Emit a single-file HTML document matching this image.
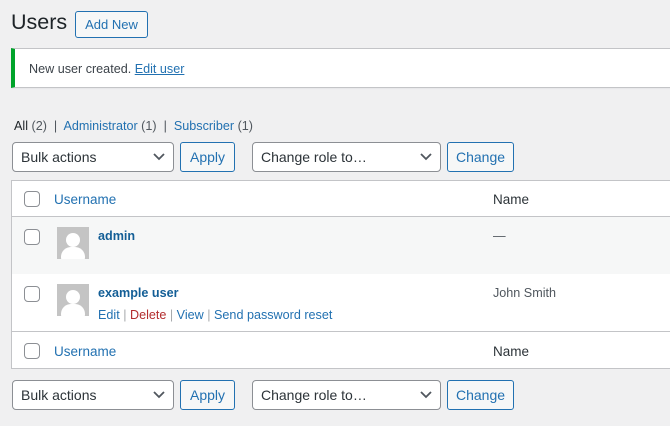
<!DOCTYPE html>
<html><head><style>
*{box-sizing:border-box}
body{margin:0;width:670px;height:426px;background:#f0f0f1;font-family:"Liberation Sans",sans-serif;font-size:13px;color:#3c434a;overflow:hidden;position:relative}
.a{position:absolute}
a{color:#2271b1;text-decoration:none}
.btn{position:absolute;border:1px solid #2271b1;color:#2271b1;background:#f6f7f7;border-radius:3px;font-size:13px;display:flex;align-items:center;justify-content:center}
.sel{position:absolute;border:1px solid #8c8f94;background:#fff;border-radius:4px;font-size:14px;color:#2c3338;padding-left:8px;display:flex;align-items:center}
.sel svg{position:absolute;right:8px;top:10px}
.cb{position:absolute;width:16px;height:16px;border:1px solid #8c8f94;border-radius:4px;background:#fff;left:12px}
.row{position:absolute;left:0;width:100%}
.av{position:absolute;left:45px;width:32px;height:32px;background:#c4c4c4;overflow:hidden}
.sm{font-size:12.6px}
</style></head><body>
<div class="a" style="left:11px;top:10px;font-size:21.5px;color:#1d2327">Users</div>
<div class="btn" style="left:75px;top:11px;width:73px;height:27px">Add New</div>
<div class="a" style="left:11px;top:48px;width:670px;height:40px;background:#fff;border:1px solid #c3c4c7;border-left:4px solid #00a32a;box-shadow:0 1px 1px rgba(0,0,0,.04)"></div>
<div class="a sm" style="left:29px;top:62px">New user created. <a style="text-decoration:underline">Edit user</a></div>
<div class="a sm" style="left:14px;top:119px;color:#50575e"><span style="color:#1d2327">All</span> <span style="color:#50575e">(2)</span> &nbsp;|&nbsp; <a>Administrator <span style="color:#50575e">(1)</span></a> &nbsp;|&nbsp; <a>Subscriber <span style="color:#50575e">(1)</span></a></div>

<div class="sel" style="left:12px;top:142px;width:162px;height:30px">Bulk actions<svg width="12" height="8"><path d="M1 1l5 5 5-5" stroke="#50575e" stroke-width="1.8" fill="none"/></svg></div>
<div class="btn" style="left:180px;top:142px;width:55px;height:30px;font-size:14px">Apply</div>
<div class="sel" style="left:252px;top:142px;width:189px;height:30px">Change role to…<svg width="12" height="8"><path d="M1 1l5 5 5-5" stroke="#50575e" stroke-width="1.8" fill="none"/></svg></div>
<div class="btn" style="left:447px;top:142px;width:67px;height:30px;font-size:14px">Change</div>

<div class="a" style="left:11px;top:180px;width:670px;height:189px;background:#fff;border:1px solid #c3c4c7">
 <div class="row" style="top:0;height:36px;border-bottom:1px solid #c3c4c7">
  <div class="cb" style="top:10px"></div><a class="a" style="left:42px;top:11px;font-size:13.5px">Username</a><span class="a" style="left:481px;top:11px;font-size:13.5px;color:#2c3338">Name</span></div>
 <div class="row" style="top:36px;height:57px;background:#f6f7f7">
  <div class="cb" style="top:12px"></div>
  <div class="av" style="top:10px"><div class="a" style="left:9px;top:6px;width:14px;height:14px;border-radius:50%;background:#fff"></div><div class="a" style="left:4px;top:20px;width:24px;height:20px;border-radius:50%/60%;background:#fff"></div></div>
  <a class="a sm" style="left:86px;top:12px;font-weight:bold;color:#135e96">admin</a>
  <span class="a sm" style="left:481px;top:12px;color:#50575e">—</span></div>
 <div class="row" style="top:93px;height:58px;border-bottom:1px solid #c3c4c7">
  <div class="cb" style="top:12px"></div>
  <div class="av" style="top:10px"><div class="a" style="left:9px;top:6px;width:14px;height:14px;border-radius:50%;background:#fff"></div><div class="a" style="left:4px;top:20px;width:24px;height:20px;border-radius:50%/60%;background:#fff"></div></div>
  <a class="a sm" style="left:86px;top:12px;font-weight:bold;color:#135e96">example user</a>
  <span class="a sm" style="left:86px;top:34px;color:#a7aaad"><a>Edit</a> | <a style="color:#b32d2e">Delete</a> | <a>View</a> | <a>Send password reset</a></span>
  <span class="a sm" style="left:481px;top:12px;color:#50575e">John Smith</span></div>
 <div class="row" style="top:151px;height:37px">
  <div class="cb" style="top:11px"></div><a class="a" style="left:42px;top:12px;font-size:13.5px">Username</a><span class="a" style="left:481px;top:12px;font-size:13.5px;color:#2c3338">Name</span></div>
</div>

<div class="sel" style="left:12px;top:380px;width:162px;height:30px">Bulk actions<svg width="12" height="8"><path d="M1 1l5 5 5-5" stroke="#50575e" stroke-width="1.8" fill="none"/></svg></div>
<div class="btn" style="left:180px;top:380px;width:55px;height:30px;font-size:14px">Apply</div>
<div class="sel" style="left:252px;top:380px;width:189px;height:30px">Change role to…<svg width="12" height="8"><path d="M1 1l5 5 5-5" stroke="#50575e" stroke-width="1.8" fill="none"/></svg></div>
<div class="btn" style="left:447px;top:380px;width:67px;height:30px;font-size:14px">Change</div>
</body></html>
